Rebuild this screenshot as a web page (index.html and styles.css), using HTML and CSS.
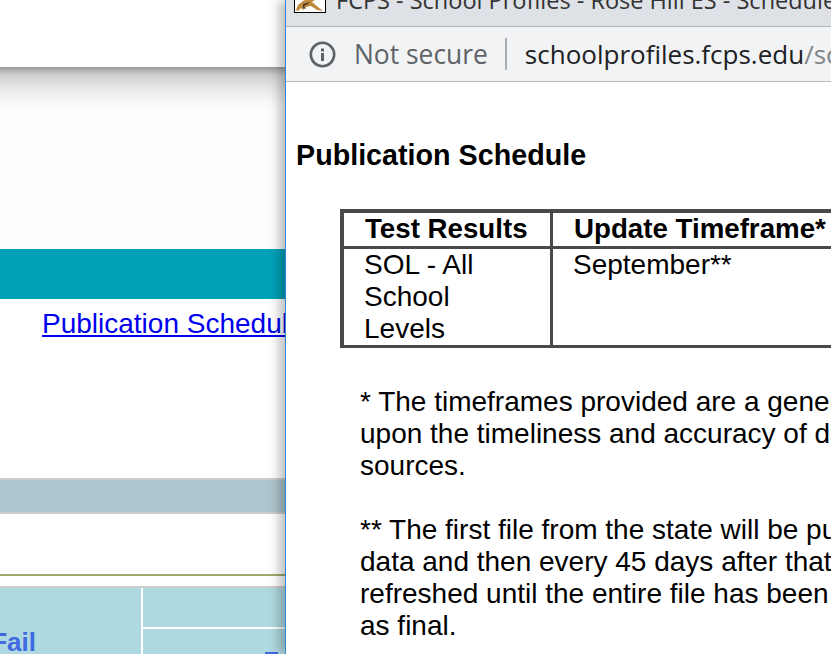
FILE: index.html
```html
<!DOCTYPE html>
<html lang="en">
<head>
    <meta charset="UTF-8">
    <title>Publication Schedule</title>
    <link rel="stylesheet" href="styles.css">
</head>
<body>
    <div class="screen">
        <div class="back-page">
            <div class="back-top"></div>
            <div class="back-shadow"></div>
            <div class="teal-bar"></div>
            <div class="link-row"><a href="#">Publication Schedule</a></div>
            <div class="gray-band"></div>
            <div class="olive-line"></div>
            <div class="back-table">
                <div class="fail-cell"><span class="fail-text">Pass/Fail</span></div>
                <div class="side-cells">
                    <div class="side-cell"></div>
                    <div class="side-cell"><span class="side-mark"></span></div>
                </div>
            </div>
        </div>

        <div class="popup">
            <div class="title-bar">
                <div class="favicon">
                    <svg width="30" height="13" viewBox="0 0 30 13">
                        <path d="M1 11 L3 6 L8 2 L12 0 L21 0 L17 3 L23 8 L28 12 L22 11 L16 7 L11 8 L8 11 L6 9 L3 12 Z" fill="#c08a3c"/>
                        <path d="M8 5 L15 3 L13 5 L9 7 L11 10 L8 9 Z" fill="#4a3a25"/>
                    </svg>
                </div>
                <div class="title-text">FCPS - School Profiles - Rose Hill ES - Schedule</div>
            </div>
            <div class="address-bar">
                <svg class="info-icon" width="27" height="27" viewBox="0 0 27 27">
                    <circle cx="13.5" cy="13.5" r="11.7" fill="none" stroke="#5f6368" stroke-width="2.6"/>
                    <rect x="12" y="12" width="3" height="8" fill="#5f6368"/>
                    <rect x="12" y="7.5" width="3" height="3" fill="#5f6368"/>
                </svg>
                <span class="not-secure">Not secure</span>
                <span class="divider"></span>
                <span class="url">schoolprofiles.fcps.edu<span class="url-path">/schoolprofiles</span></span>
            </div>
            <div class="popup-body">
                <h1 class="page-title">Publication Schedule</h1>
                <table class="schedule">
                    <tr>
                        <th class="col-test">Test Results</th>
                        <th class="col-time">Update Timeframe*</th>
                    </tr>
                    <tr>
                        <td>SOL - All School Levels</td>
                        <td>September**</td>
                    </tr>
                </table>
                <p class="note">* The timeframes provided are a general guide<br>upon the timeliness and accuracy of data<br>sources.</p>
                <p class="note">** The first file from the state will be published<br>data and then every 45 days after that<br>refreshed until the entire file has been<br>as final.</p>
            </div>
        </div>
    </div>
</body>
</html>
```

FILE: styles.css
```css
html, body {
    margin: 0;
    padding: 0;
    height: 100%;
    overflow: hidden;
    background-color: white;
}

.screen {
    display: flex;
    width: 831px;
    height: 654px;
    overflow: hidden;
    font-family: 'Liberation Sans', Arial, sans-serif;
    color: #000;
}

/* page behind the popup */
.back-page {
    width: 285px;
    flex-shrink: 0;
    display: flex;
    flex-direction: column;
    overflow: hidden;
}

.back-top {
    height: 67px;
    background-color: white;
}

.back-shadow {
    height: 182px;
    background: linear-gradient(#9a9a9a 0, #cfcfcf 8px, #e8e8e8 22px, #f9f9f9 36px, #fdfdfd 45px, #fdfdfd 100%);
}

.teal-bar {
    height: 50px;
    background-color: #00a2b8;
}

.link-row {
    height: 179px;
    padding-top: 9px;
    box-sizing: border-box;
    padding-left: 42px;
    font-size: 28px;
    line-height: 32px;
    white-space: nowrap;
}

.link-row a {
    color: #0000ee;
}

.gray-band {
    height: 36px;
    box-sizing: border-box;
    background-color: #adc6cd;
    border-top: 2px solid #cccccc;
    border-bottom: 2px solid #cccccc;
}

.olive-line {
    height: 72px;
    background-color: white;
    overflow: hidden;
}

.olive-line::after {
    content: "";
    display: block;
    height: 2px;
    margin-top: 60px;
    background-color: #a3a66d;
}

.back-table {
    flex: 1;
    display: flex;
    background-color: #afd9e0;
    border-top: 2px solid #cccccc;
}

.fail-cell {
    width: 141px;
    flex-shrink: 0;
    position: relative;
    overflow: hidden;
    border-right: 2px solid white;
}

.fail-text {
    position: absolute;
    right: 105px;
    top: 39px;
    font-size: 26px;
    font-weight: bold;
    color: #4169e1;
    white-space: nowrap;
}

.side-cells {
    flex: 1;
    display: flex;
    flex-direction: column;
}

.side-cell {
    height: 39px;
    position: relative;
}

.side-cell + .side-cell {
    flex: 1;
    border-top: 2px solid white;
}

.side-mark {
    position: absolute;
    left: 122px;
    bottom: 0;
    width: 13px;
    height: 2px;
    background-color: #4169e1;
}

/* popup window */
.popup {
    flex: 1;
    min-width: 0;
    border-left: 1px solid #2d88d8;
    box-shadow: -6px 0 10px rgba(0, 0, 0, 0.25);
    background-color: white;
    display: flex;
    flex-direction: column;
    overflow: hidden;
    position: relative;
}

.title-bar {
    height: 13px;
    flex-shrink: 0;
    background-color: #dee1e6;
    border-bottom: 1px solid #b0b3b7;
    display: flex;
    align-items: flex-end;
    gap: 10px;
    padding: 0 0 13px 8px;
    white-space: nowrap;
}

.favicon {
    width: 30px;
    height: 13px;
    flex-shrink: 0;
    border: 1px solid #000;
    border-top: none;
    background-color: white;
}

.favicon svg {
    display: block;
}

.title-text {
    font-family: 'Open Sans', sans-serif;
    font-size: 23.5px;
    line-height: 23px;
    margin-bottom: 1px;
    color: #333;
}

.address-bar {
    height: 54px;
    flex-shrink: 0;
    background-color: #f1f3f4;
    border-bottom: 1px solid #b8babc;
    display: flex;
    align-items: center;
    padding-left: 23px;
    font-family: 'Open Sans', sans-serif;
    font-size: 26px;
    white-space: nowrap;
}

.info-icon {
    flex-shrink: 0;
}

.not-secure {
    flex-shrink: 0;
    margin-left: 18px;
    font-size: 26.4px;
    color: #5f6368;
}

.divider {
    width: 2px;
    height: 32px;
    flex-shrink: 0;
    margin: 0 18px 0 17px;
    background-color: #a9acb0;
}

.url {
    flex-shrink: 0;
    color: #202124;
}

.url-path {
    color: #80868b;
}

.popup-body {
    width: 700px;
    padding: 57px 0 0 11px;
}

.page-title {
    margin: 0 0 38px -1px;
    font-size: 28.7px;
    line-height: 32px;
    font-weight: bold;
}

.schedule {
    margin-left: 43px;
    border-style: solid;
    border-color: #4a4a4a;
    border-width: 4px 3px 3px 4px;
    border-collapse: separate;
    border-spacing: 0;
    font-size: 28px;
    line-height: 32px;
    width: 640px;
    table-layout: fixed;
}

.schedule th, .schedule td {
    text-align: left;
    vertical-align: top;
    padding: 0 22px 0 20px;
    font-weight: normal;
}

.schedule th {
    font-weight: bold;
    font-size: 27.7px;
    padding-left: 21px;
    height: 33px;
    border-bottom: 3px solid #4a4a4a;
}

.schedule .col-test {
    width: 163px;
    border-right: 3px solid #4a4a4a;
}

.schedule td:first-child {
    border-right: 3px solid #4a4a4a;
}

.note {
    margin: 32px 0 0 63px;
    font-size: 28px;
    line-height: 32px;
    white-space: nowrap;
}

.schedule + .note {
    margin-top: 38px;
}
```
